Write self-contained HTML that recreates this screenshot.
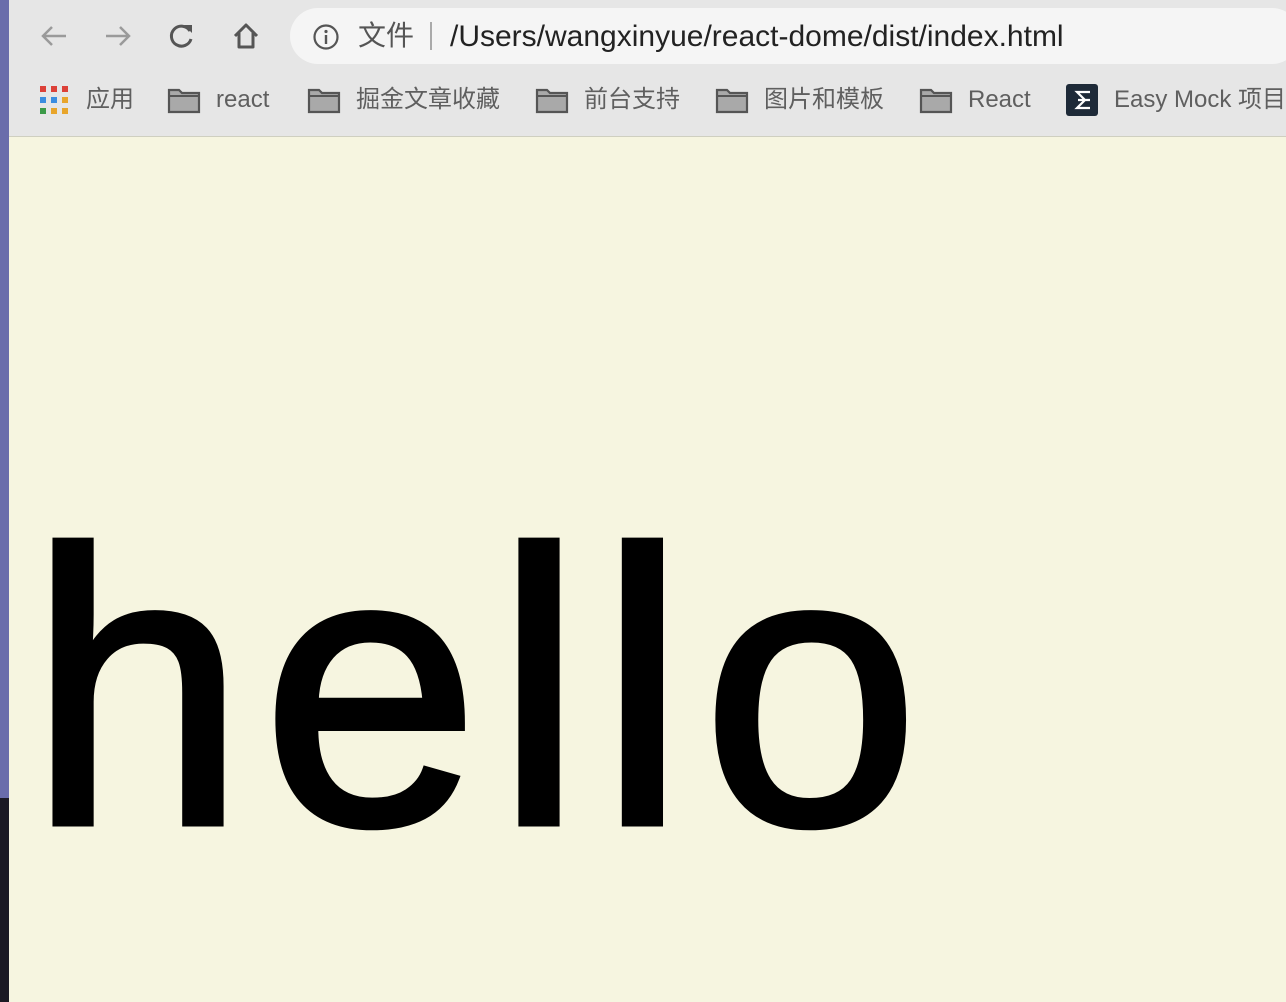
<!DOCTYPE html>
<html><head><meta charset="utf-8"><style>
*{margin:0;padding:0;box-sizing:border-box}
body{width:1286px;height:1002px;overflow:hidden;background:#f6f5e0;position:relative;font-family:"Liberation Sans","Noto Sans CJK SC",sans-serif}
.strip{position:absolute;left:0;top:0;width:9px;height:1002px;background:#6a6dab}
.strip2{position:absolute;left:0;top:798px;width:9px;height:204px;background:#1b1a24}
.bar{position:absolute;left:9px;top:0;width:1277px;height:137px;background:#e6e6e6;border-bottom:1px solid #cfcfc0}
.addr{position:absolute;left:290px;top:8px;width:1010px;height:56px;border-radius:28px;background:#f5f5f5}
.t{position:absolute;color:#5f5f5f;font-size:24px;line-height:28px;height:28px;white-space:nowrap;top:86px}
.url{position:absolute;left:450px;top:20px;font-size:30px;line-height:34px;color:#222;white-space:nowrap}
.hello{position:absolute;left:29px;top:495px;font-size:389px;line-height:1;color:#000;letter-spacing:17px;-webkit-text-stroke:7px #000}
svg{position:absolute}
</style></head><body>
<div class="strip"></div><div class="strip2"></div>
<div class="bar"></div>
<div class="addr"></div>
<svg style="left:38px;top:22px" width="32" height="28" viewBox="0 0 32 28"><path d="M28 14H5M14 5L5 14l9 9" stroke="#9a9a9a" stroke-width="2.5" fill="none"/></svg>
<svg style="left:102px;top:22px" width="32" height="28" viewBox="0 0 32 28"><path d="M4 14h23M18 5l9 9-9 9" stroke="#9a9a9a" stroke-width="2.5" fill="none"/></svg>
<svg style="left:166px;top:21px" width="32" height="30" viewBox="0 0 32 30"><path d="M24 10a10 10 0 1 0 1 8" stroke="#555" stroke-width="3" fill="none"/><path d="M18 4h8v8z" fill="#555"/></svg>
<svg style="left:230px;top:20px" width="32" height="32" viewBox="0 0 32 32"><path d="M5 16L16 5l11 11M9 13v14h14V13" stroke="#555" stroke-width="3" fill="none" stroke-linejoin="round"/></svg>
<svg style="left:312px;top:23px" width="28" height="28" viewBox="0 0 28 28"><circle cx="14" cy="14" r="11.5" stroke="#555" stroke-width="2.2" fill="none"/><rect x="12.8" y="12" width="2.4" height="9" fill="#555"/><circle cx="14" cy="8.5" r="1.6" fill="#555"/></svg>
<div class="t" style="left:358px;top:19px;font-size:28px;line-height:34px;height:34px;color:#555">文件</div>
<div style="position:absolute;left:430px;top:22px;width:2px;height:28px;background:#aaa"></div>
<div class="url">/Users/wangxinyue/react-dome/dist/index.html</div>
<svg style="left:40px;top:86px" width="28" height="28" viewBox="0 0 28 28">
<rect x="0" y="0" width="6" height="6" fill="#dc4138"/><rect x="11" y="0" width="6" height="6" fill="#dc4138"/><rect x="22" y="0" width="6" height="6" fill="#dc4138"/>
<rect x="0" y="11" width="6" height="6" fill="#3b8de0"/><rect x="11" y="11" width="6" height="6" fill="#3b8de0"/><rect x="22" y="11" width="6" height="6" fill="#e8a52b"/>
<rect x="0" y="22" width="6" height="6" fill="#3b9a48"/><rect x="11" y="22" width="6" height="6" fill="#e8a52b"/><rect x="22" y="22" width="6" height="6" fill="#e8a52b"/></svg>
<div class="t" style="left:86px">应用</div>
<svg style="left:167px;top:86px" width="34" height="28" viewBox="0 0 34 28"><path d="M2 4h10l3 3h17v19H2z" fill="#a9a9a9" stroke="#555" stroke-width="2.2"/><path d="M2 10h30" stroke="#555" stroke-width="2"/></svg>
<div class="t" style="left:216px">react</div>
<svg style="left:307px;top:86px" width="34" height="28" viewBox="0 0 34 28"><path d="M2 4h10l3 3h17v19H2z" fill="#a9a9a9" stroke="#555" stroke-width="2.2"/><path d="M2 10h30" stroke="#555" stroke-width="2"/></svg>
<div class="t" style="left:356px">掘金文章收藏</div>
<svg style="left:535px;top:86px" width="34" height="28" viewBox="0 0 34 28"><path d="M2 4h10l3 3h17v19H2z" fill="#a9a9a9" stroke="#555" stroke-width="2.2"/><path d="M2 10h30" stroke="#555" stroke-width="2"/></svg>
<div class="t" style="left:584px">前台支持</div>
<svg style="left:715px;top:86px" width="34" height="28" viewBox="0 0 34 28"><path d="M2 4h10l3 3h17v19H2z" fill="#a9a9a9" stroke="#555" stroke-width="2.2"/><path d="M2 10h30" stroke="#555" stroke-width="2"/></svg>
<div class="t" style="left:764px">图片和模板</div>
<svg style="left:919px;top:86px" width="34" height="28" viewBox="0 0 34 28"><path d="M2 4h10l3 3h17v19H2z" fill="#a9a9a9" stroke="#555" stroke-width="2.2"/><path d="M2 10h30" stroke="#555" stroke-width="2"/></svg>
<div class="t" style="left:968px">React</div>
<svg style="left:1066px;top:84px" width="32" height="32" viewBox="0 0 32 32"><rect width="32" height="32" rx="3" fill="#1e2a38"/><path d="M24 8H11l8 8-8 8h13M12 16h12" stroke="#fff" stroke-width="2.2" fill="none"/></svg>
<div class="t" style="left:1114px">Easy Mock 项目</div>
<div class="hello">hello</div>
</body></html>
